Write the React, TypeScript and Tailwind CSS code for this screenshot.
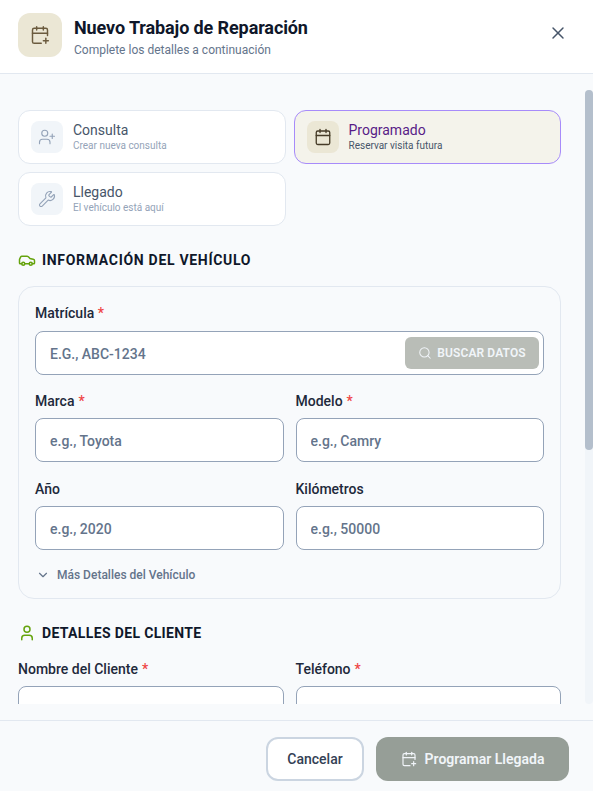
import React from 'react'
import { CalendarPlus, Calendar, UserPlus, Wrench, Car, User, Search, ChevronDown, X } from 'lucide-react'

// ================================
// SMALL PARTS
// ================================

const TypeCard = ({ icon, title, sub, active }: { icon: React.ReactNode; title: string; sub: string; active?: boolean }) => (
  <div
    className={`flex h-[54px] items-center gap-[10px] rounded-xl border px-3 ${
      active ? 'border-[#a78bfa] bg-[#f4f3eb]' : 'border-[#e2e8f0] bg-white'
    }`}
  >
    <div
      className={`flex h-8 w-8 flex-none items-center justify-center rounded-lg ${
        active ? 'bg-[#ebe7d5] text-[#453b27]' : 'bg-[#f1f5f9] text-[#94a3b8]'
      }`}
    >
      {icon}
    </div>
    <div className="min-w-0">
      <div className={`text-[14px] leading-[18px] ${active ? 'text-[#581c87]' : 'text-[#475569]'}`}>{title}</div>
      <div className={`text-[10px] leading-[14px] ${active ? 'text-[#475569]' : 'text-[#94a3b8]'}`}>{sub}</div>
    </div>
  </div>
)

const SectionTitle = ({ icon, text, wide }: { icon: React.ReactNode; text: string; wide?: boolean }) => (
  <div className="flex items-center gap-[6px] text-[#65a30d]">
    {icon}
    <h3 className={`text-[14px] leading-5 font-bold text-[#0f172a] uppercase ${wide ? 'tracking-[0.05em]' : 'tracking-[0.025em]'}`}>{text}</h3>
  </div>
)

const Field = ({ label, required, placeholder }: { label: string; required?: boolean; placeholder?: string }) => (
  <div className="min-w-0">
    <label className="mb-[7px] block text-[14px] leading-5 font-medium text-[#1e293b]">
      {label}
      {required && <span className="ml-1 text-[#ef4444]">*</span>}
    </label>
    <input
      placeholder={placeholder}
      className="h-11 w-full rounded-lg border border-[#94a3b8] bg-white px-[14px] pt-[1px] text-[14px] font-medium text-[#1e293b] outline-none placeholder:text-[#64748b]"
    />
  </div>
)

// ================================
// MAIN COMPONENT
// ================================

export default function App() {
  return (
    <div className="flex h-[791px] w-[593px] flex-col overflow-hidden bg-[#f8fafc] font-['Roboto',sans-serif]">
      {/* Header */}
      <header className="flex h-[74px] flex-none items-start justify-between border-b border-[#e2e8f0] bg-white pt-[13px] pr-[25px] pl-[18px]">
        <div className="flex items-start gap-3">
          <div className="flex h-11 w-11 items-center justify-center rounded-xl bg-[#ebe7d5] text-[#6b5b3e]">
            <CalendarPlus size={20} strokeWidth={1.75} />
          </div>
          <div className="pt-[2px]">
            <h2 className="text-[18px] leading-[26px] font-bold tracking-[-0.006em] text-[#0f172a]">Nuevo Trabajo de Reparación</h2>
            <p className="mt-[1px] text-[12px] leading-4 text-[#64748b]">Complete los detalles a continuación</p>
          </div>
        </div>
        <X size={20} strokeWidth={1.75} className="mt-[10px] text-[#475569]" />
      </header>

      {/* Body */}
      <main className="relative mt-4 mb-4 min-h-0 flex-1 overflow-hidden">
        <div className="absolute top-0 right-0 bottom-0 w-2 rounded-full bg-[#f1f5f9]">
          <div className="h-[360px] w-full rounded-full bg-[#b4bfcc]" />
        </div>

        <div className="pt-5 pr-8 pl-[18px]">
          <div className="grid grid-cols-2 gap-2">
            <TypeCard icon={<UserPlus size={18} strokeWidth={1.5} />} title="Consulta" sub="Crear nueva consulta" />
            <TypeCard active icon={<Calendar size={18} strokeWidth={1.75} />} title="Programado" sub="Reservar visita futura" />
            <TypeCard icon={<Wrench size={18} strokeWidth={1.5} />} title="Llegado" sub="El vehículo está aquí" />
          </div>

          <div className="mt-6">
            <SectionTitle wide icon={<Car size={18} strokeWidth={2} />} text="Información del Vehículo" />
          </div>

          <section className="mt-4 rounded-2xl border border-[#e2e8f0] bg-[#f8fafc] px-4 pt-4 pb-[13px]">
            <div>
              <label className="mb-2 block text-[14px] leading-5 font-medium text-[#1e293b]">
                Matrícula <span className="text-[#ef4444]">*</span>
              </label>
              <div className="relative">
                <input
                  placeholder="e.g., abc-1234"
                  className="h-11 w-full rounded-lg border border-[#94a3b8] bg-white px-[14px] pt-[1px] text-[14px] font-medium uppercase outline-none placeholder:text-[#64748b]"
                />
                <div className="absolute top-[6px] right-[5px] flex h-8 w-[134px] items-center justify-center gap-[5px] rounded-md bg-[#b9bdb7] text-[12px] font-semibold tracking-[0.01em] text-[#f1f5f9]">
                  <Search size={14} strokeWidth={1.75} />
                  BUSCAR DATOS
                </div>
              </div>
            </div>

            <div className="mt-4 grid grid-cols-2 gap-x-3 gap-y-[17px]">
              <Field label="Marca" required placeholder="e.g., Toyota" />
              <Field label="Modelo" required placeholder="e.g., Camry" />
              <Field label="Año" placeholder="e.g., 2020" />
              <Field label="Kilómetros" placeholder="e.g., 50000" />
            </div>

            <div className="mt-[15px] flex items-center gap-[7px] pl-[1px] text-[12px] leading-5 font-medium text-[#64748b]">
              <ChevronDown size={14} strokeWidth={2} />
              Más Detalles del Vehículo
            </div>
          </section>

          <div className="mt-6">
            <SectionTitle icon={<User size={18} strokeWidth={2} />} text="Detalles del Cliente" />
          </div>

          <div className="mt-[16px] grid grid-cols-2 gap-3">
            <Field label="Nombre del Cliente" required />
            <Field label="Teléfono" required />
          </div>
        </div>
      </main>

      {/* Footer */}
      <footer className="flex h-[71px] flex-none items-start justify-end gap-3 border-t border-[#e2e8f0] bg-[#f8fafc] pt-4 pr-6">
        <button className="h-11 w-[98px] rounded-xl border-2 border-[#cbd5e1] bg-white text-[14px] font-medium text-[#334155]">
          Cancelar
        </button>
        <button className="flex h-11 w-[193px] items-center justify-center gap-[8px] rounded-xl bg-[#969e97] text-[14px] font-semibold text-[#f1f5f9]">
          <CalendarPlus size={16} strokeWidth={1.75} />
          Programar Llegada
        </button>
      </footer>
    </div>
  )
}
